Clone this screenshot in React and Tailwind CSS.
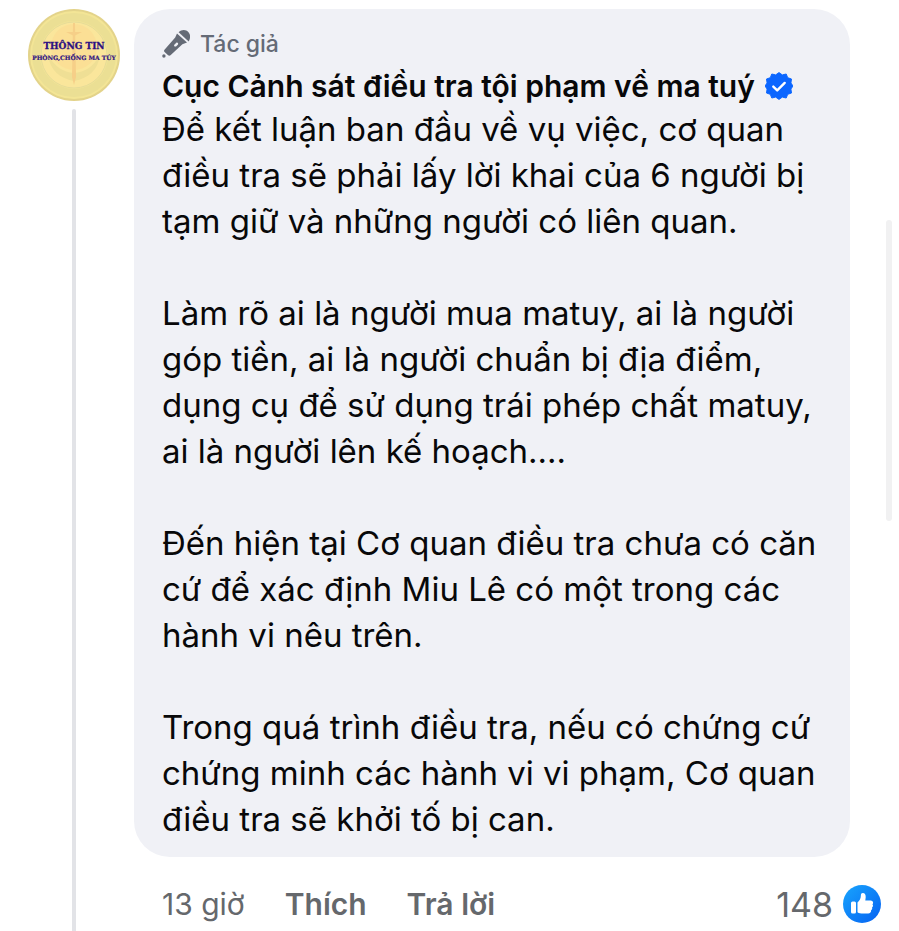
const paragraphs = [
  [
    "Để kết luận ban đầu về vụ việc, cơ quan",
    "điều tra sẽ phải lấy lời khai của 6 người bị",
    "tạm giữ và những người có liên quan.",
  ],
  [
    "Làm rõ ai là người mua matuy, ai là người",
    "góp tiền, ai là người chuẩn bị địa điểm,",
    "dụng cụ để sử dụng trái phép chất matuy,",
    "ai là người lên kế hoạch....",
  ],
  [
    "Đến hiện tại Cơ quan điều tra chưa có căn",
    "cứ để xác định Miu Lê có một trong các",
    "hành vi nêu trên.",
  ],
  [
    "Trong quá trình điều tra, nếu có chứng cứ",
    "chứng minh các hành vi vi phạm, Cơ quan",
    "điều tra sẽ khởi tố bị can.",
  ],
];

const Avatar = () => (
  <svg viewBox="0 0 92 92" className="size-[92px] shrink-0" role="img" aria-label="Thông tin phòng, chống ma túy">
    <circle cx="46" cy="46" r="46" fill="#e3d38a" />
    <circle cx="46" cy="46" r="44" fill="#f3e596" />
    <circle cx="46" cy="46" r="38" fill="none" stroke="#ebdf94" strokeWidth="8" />
    <circle cx="46" cy="46" r="33" fill="#fae69b" stroke="#e6dc98" />
    <circle cx="46" cy="38" r="23" fill="#fbdf95" />
    <path d="M20 46c2 15 11 23 26 26 15-3 24-11 26-26-7 12-15 17-26 18-11-1-19-6-26-18Z" fill="#efdf95" />
    <path d="M45 14h2l1 54-2 8-2-8Z" fill="#f6cf88" />
    <path d="M38 23h16l-8 4Z" fill="#f6cf88" />
    <g fill="#2c1183" stroke="#2c1183" textAnchor="middle" fontFamily="DejaVu Serif, serif" fontWeight="700">
      <text x="46" y="40" fontSize="9" strokeWidth="0.3">THÔNG TIN</text>
      <text x="46" y="51" fontSize="6" strokeWidth="0.2">PHÒNG,CHỐNG MA TÚY</text>
    </g>
  </svg>
);

const MicIcon = () => (
  <svg viewBox="0 0 28 28" className="size-7" fill="#656b76" aria-hidden="true">
    <path d="M16.600 2.300C19.500-.6 24-.6 26.500 2.200c2.300 2.600 2 6.300.2 9.200Z" />
    <path d="M15 3.600 25 12.400l-4.600 1.900L8.500 25.200c-.8.700-1.700.6-2.400 0l-3.500-3.200c-.7-.7-.7-1.500-.1-2.300L13.200 7.600Z" />
    <circle cx="1.900" cy="26" r="1.700" />
    <path d="m12.300 14.700 2-2c1.200-.5 2.200.6 1.700 1.700l-2 2c-1.300.7-2.500-.5-1.700-1.700Z" fill="#f0f1f6" />
  </svg>
);

const VerifiedIcon = () => (
  <svg viewBox="0 0 28 28" className="size-7 shrink-0" role="img" aria-label="Đã xác minh">
    <path
      d="m14 .6 3.300 2.300 3.900-.9 1.500 3.700 3.800 1.300-.6 4L28 14l-2.100 3 .6 4-3.800 1.300-1.500 3.700-3.900-.9-3.300 2.300-3.300-2.300-3.900.9-1.500-3.700L1.500 21l.6-4L0 14l2.100-3-.6-4 3.800-1.300L6.800 2l3.900.9Z"
      fill="#0b66ff"
      stroke="#0b66ff"
      strokeLinejoin="round"
    />
    <path d="m8.300 14.600 3.900 3.800 7.500-7.500" fill="none" stroke="#fff" strokeWidth="2.400" strokeLinecap="round" strokeLinejoin="round" />
  </svg>
);

const LikeIcon = () => (
  <svg viewBox="0 0 38 38" className="size-[38px]" aria-hidden="true">
    <defs>
      <linearGradient id="like" x1="0" y1="0" x2="1" y2="1">
        <stop offset="0" stopColor="#18a5fd" />
        <stop offset="1" stopColor="#0561f2" />
      </linearGradient>
    </defs>
    <circle cx="19" cy="19" r="19" fill="url(#like)" />
    <rect x="8" y="16.500" width="5" height="12" rx="1.500" fill="#fff" />
    <path
      d="M14.500 17.500c2-1.600 3.400-4 3.400-7.200 0-1.400.7-2.200 1.900-2.200 2.200 0 3 1.800 2.900 4.200l-.4 3.200h5.300c1.500 0 2.500 1 2.500 2.200 0 .7-.3 1.200-.7 1.600.6.500.7 1.200.5 1.900-.1.600-.5 1-.9 1.300.3.500.3 1 .1 1.600-.2.600-.6.900-1 1.200.2 2-.9 3.200-3 3.200h-5.300c-2 0-3.800-.3-5.300-1.300Z"
      fill="#fff"
    />
  </svg>
);

export default function App() {
  return (
    <main className="relative flex min-h-screen bg-white pt-[9px] pr-[18px] pl-7 font-['Inter','Noto_Sans',sans-serif]">
      {/* avatar and thread line */}
      <div className="flex w-[92px] shrink-0 flex-col items-center gap-2">
        <Avatar />
        <div className="w-1 grow rounded-t-sm bg-[#e2e3e7]" />
      </div>

      <article className="ml-[14px] min-w-0 grow">
        <div className="mr-[31px] rounded-[36px] bg-[#f0f1f6] px-7 pt-[13px] pb-[15px]">
          <div className="flex h-11 items-center gap-[10px] text-[23px] font-medium text-[#656b76]">
            <MicIcon />
            <span>Tác giả</span>
          </div>
          <div className="flex h-10 items-center gap-[10px] whitespace-nowrap">
            <h1 className="text-[30px] font-semibold text-[#080809]">
              <a href="#profile">Cục Cảnh sát điều tra tội phạm về ma tuý</a>
            </h1>
            <VerifiedIcon />
          </div>
          <div className="flex flex-col gap-[46px] text-[33px] leading-[46px] text-[#080809]">
            {paragraphs.map((lines) => (
              <p key={lines[0]} className="whitespace-pre">
                {lines.join("\n")}
              </p>
            ))}
          </div>
        </div>

        <footer className="flex h-[74px] items-center pt-5 pl-7 text-[30px] text-[#65686c]">
          <span>13 giờ</span>
          <button type="button" className="ml-10 font-semibold">Thích</button>
          <button type="button" className="ml-10 font-semibold">Trả lời</button>
          <button type="button" className="ml-auto flex items-center gap-[10px] text-[34px]">
            <span>148</span>
            <LikeIcon />
          </button>
        </footer>
      </article>

      {/* scroll indicator */}
      <div className="absolute top-[220px] right-[7px] h-[301px] w-[6px] rounded-full bg-[#f1f1f2]" />
    </main>
  );
}
